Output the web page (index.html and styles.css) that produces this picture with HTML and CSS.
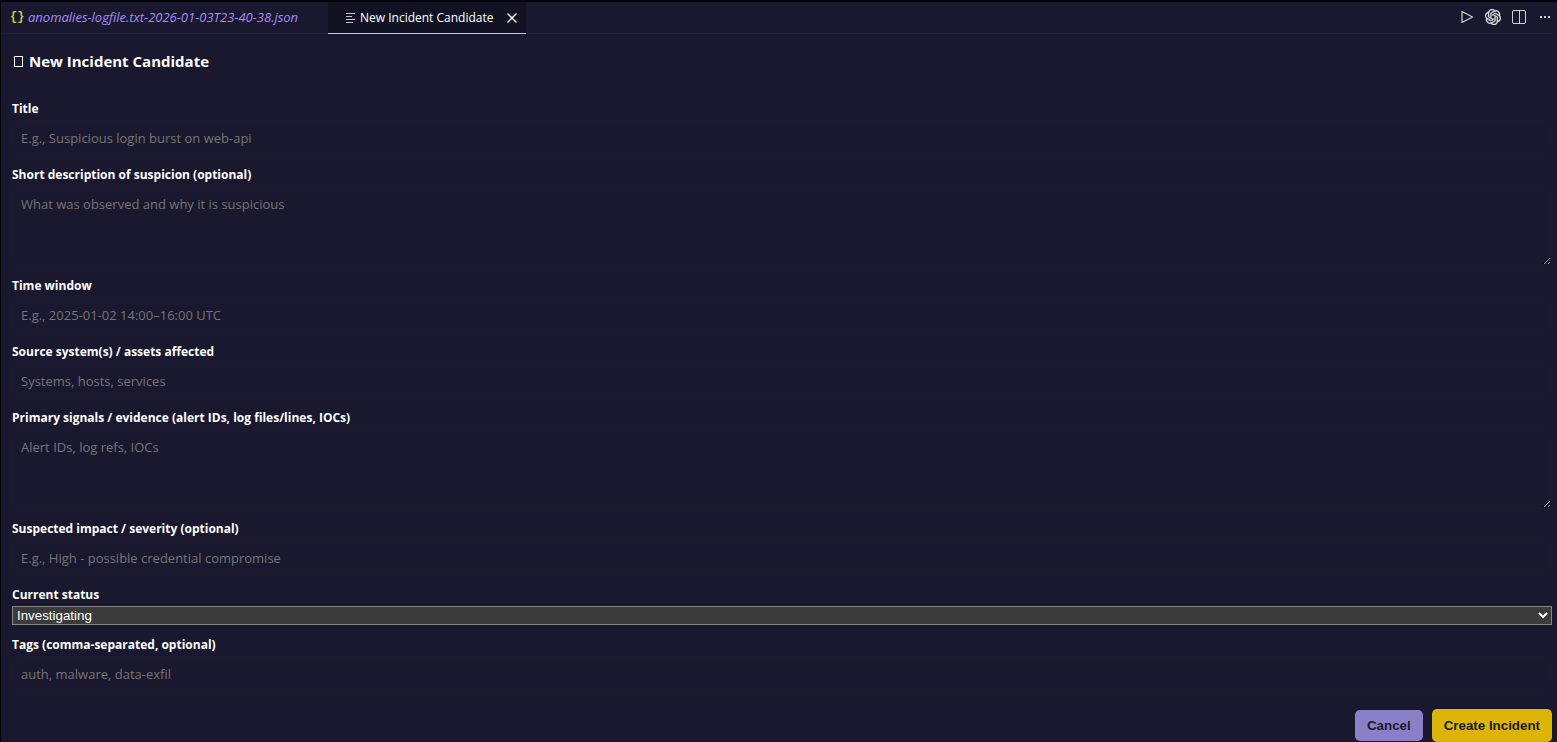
FILE: index.html
```html
<!DOCTYPE html>
<html lang="en">
<head>
  <meta charset="UTF-8">
  <meta name="viewport" content="width=device-width, initial-scale=1.0">
  <title>New Incident Candidate</title>
  <link rel="stylesheet" href="styles.css">
</head>
<body>

  <!-- Editor Tabs -->
  <header class="tab-bar">
    <div class="tab">
      <span class="json-icon">{}</span>
      <span class="tab-name">anomalies-logfile.txt-2026-01-03T23-40-38.json</span>
    </div>
    <div class="tab active">
      <svg class="list-icon" width="10" height="10" viewBox="0 0 10 10" stroke="#c5c5c5">
        <path d="M1 .5h9M1 3.5h6M1 6.5h9M1 9.500h7"/>
      </svg>
      <span class="tab-name">New Incident Candidate</span>
      <button class="icon-btn close-btn" aria-label="Close">
        <svg width="10" height="10" viewBox="0 0 10 10" fill="none" stroke="#fff" stroke-width="1.4">
          <path d="M.5 .5l9 9M9.500 .5l-9 9"/>
        </svg>
      </button>
    </div>
    <div class="actions">
      <button class="icon-btn" aria-label="Run">
        <svg width="16" height="16" viewBox="0 0 16 16" fill="none" stroke="#d0d0d0" stroke-linejoin="round" stroke-width="1.2">
          <path d="M3 2.500v11L13.500 8z"/>
        </svg>
      </button>
      <button class="icon-btn" aria-label="Open chat">
        <svg width="16" height="16" viewBox="0 0 24 24" fill="#e4e4e4" stroke="#e4e4e4" stroke-width=".5">
          <path d="M22.282 9.821a5.985 5.985 0 0 0-.516-4.910 6.046 6.046 0 0 0-6.510-2.900A6.065 6.065 0 0 0 4.981 4.182a5.985 5.985 0 0 0-3.998 2.900 6.046 6.046 0 0 0 .743 7.097 5.980 5.980 0 0 0 .511 4.911 6.051 6.051 0 0 0 6.515 2.900A5.985 5.985 0 0 0 13.260 24a6.056 6.056 0 0 0 5.772-4.206 5.990 5.990 0 0 0 3.998-2.900 6.056 6.056 0 0 0-.748-7.073zM13.260 22.430a4.476 4.476 0 0 1-2.876-1.041l.141-.080 4.779-2.758a.795.795 0 0 0 .393-.681v-6.737l2.020 1.169a.071.071 0 0 1 .038.052v5.583a4.504 4.504 0 0 1-4.495 4.493zM3.600 18.304a4.471 4.471 0 0 1-.535-3.014l.142.085 4.783 2.759a.771.771 0 0 0 .781 0l5.843-3.369v2.332a.080.080 0 0 1-.033.062L9.740 19.950a4.499 4.499 0 0 1-6.140-1.646zM2.341 7.896a4.485 4.485 0 0 1 2.366-1.973V11.600a.766.766 0 0 0 .388.677l5.814 3.354-2.020 1.169a.076.076 0 0 1-.071 0l-4.830-2.787A4.504 4.504 0 0 1 2.341 7.872zm16.596 3.856l-5.833-3.387L15.119 7.200a.076.076 0 0 1 .071 0l4.830 2.791a4.494 4.494 0 0 1-.676 8.105v-5.678a.790.790 0 0 0-.407-.667zm2.011-3.023l-.142-.085-4.774-2.782a.776.776 0 0 0-.785 0L9.409 9.230V6.897a.066.066 0 0 1 .028-.061l4.830-2.787a4.499 4.499 0 0 1 6.681 4.660zM8.307 12.863l-2.020-1.164a.080.080 0 0 1-.038-.057V6.075a4.499 4.499 0 0 1 7.376-3.454l-.142.081L8.704 5.460a.795.795 0 0 0-.393.681zm1.097-2.365l2.602-1.500 2.607 1.500v2.999l-2.597 1.500-2.607-1.500z"/>
        </svg>
      </button>
      <button class="icon-btn" aria-label="Split editor">
        <svg width="16" height="16" viewBox="0 0 16 16" fill="none" stroke="#d0d0d0">
          <rect x="1.500" y="1.500" width="13" height="13" rx="1.500"/>
          <path d="M8.500 1.500v13"/>
        </svg>
      </button>
      <button class="icon-btn" aria-label="More actions">
        <svg width="16" height="16" viewBox="0 0 16 16" fill="#d0d0d0">
          <path d="M3 7h2v2H3zM7 7h2v2H7zM11 7h2v2h-2z"/>
        </svg>
      </button>
    </div>
  </header>

  <!-- Incident Form -->
  <main class="page">
    <h1><span class="box-icon"></span>New Incident Candidate</h1>

    <form>
      <div class="field">
        <label for="title">Title</label>
        <input type="text" id="title" placeholder="E.g., Suspicious login burst on web-api">
      </div>
      <div class="field">
        <label for="description">Short description of suspicion (optional)</label>
        <textarea id="description" placeholder="What was observed and why it is suspicious"></textarea>
      </div>
      <div class="field">
        <label for="timeWindow">Time window</label>
        <input type="text" id="timeWindow" placeholder="E.g., 2025-01-02 14:00–16:00 UTC">
      </div>
      <div class="field">
        <label for="assets">Source system(s) / assets affected</label>
        <input type="text" id="assets" placeholder="Systems, hosts, services">
      </div>
      <div class="field">
        <label for="signals">Primary signals / evidence (alert IDs, log files/lines, IOCs)</label>
        <textarea id="signals" placeholder="Alert IDs, log refs, IOCs"></textarea>
      </div>
      <div class="field">
        <label for="impact">Suspected impact / severity (optional)</label>
        <input type="text" id="impact" placeholder="E.g., High - possible credential compromise">
      </div>
      <div class="field">
        <label for="status">Current status</label>
        <select id="status">
          <option>Investigating</option>
        </select>
      </div>
      <div class="field">
        <label for="tags">Tags (comma-separated, optional)</label>
        <input type="text" id="tags" placeholder="auth, malware, data-exfil">
      </div>

      <div class="buttons">
        <button type="button" class="btn cancel">Cancel</button>
        <button type="button" class="btn create">Create Incident</button>
      </div>
    </form>
  </main>

</body>
</html>
```
FILE: styles.css
```css
* {
  box-sizing: border-box;
}
body {
  margin: 0;
  font-family: "Segoe UI", "Open Sans", "Noto Sans", sans-serif;
  font-size: 13px;
  line-height: 18px;
  color: #fff;
  background-color: #1a182e;
  border-top: 2px solid #030206;
  border-left: 1px solid #030206;
  color-scheme: dark;
}
.tab-bar {
  display: flex;
  height: 32px;
  box-shadow: inset 0 -1px #222036;
}
.tab {
  display: flex;
  align-items: center;
  width: 327px;
  padding: 0 0 2px 9px;
  font-style: italic;
  color: #a78bfa;
  white-space: nowrap;
}
.tab.active {
  width: 198px;
  padding: 0 9px 0 17px;
  font-size: 12px;
  font-weight: 500;
  font-style: normal;
  color: #fff;
  background-color: #121225;
  border-bottom: 1px solid #f5d90a;
}
.json-icon {
  width: 18px;
  font: bold 12px "Liberation Mono", monospace;
  color: #cbcb41;
}
.list-icon {
  margin-right: 5px;
}
.icon-btn {
  display: flex;
  padding: 0;
  border: none;
  background: none;
  cursor: pointer;
}
.close-btn {
  margin-left: auto;
}
.actions {
  display: flex;
  align-items: center;
  gap: 10px;
  margin-left: auto;
  padding: 0 4px 2px 0;
}
.page {
  padding: 16px 5px 0 11px;
}
h1 {
  display: flex;
  align-items: center;
  gap: 6px;
  margin: 0 0 27px;
  font-size: 15px;
  line-height: 22px;
  font-weight: 700;
}
.box-icon {
  width: 9px;
  height: 11px;
  margin-left: 2px;
  border: 1px solid #fff;
}
.field {
  display: flex;
  flex-direction: column;
  gap: 1px;
  margin-bottom: 10px;
}
label {
  font-size: 12px;
  line-height: 20px;
  font-weight: 700;
}
input,
textarea {
  width: 100%;
  height: 35px;
  margin: 0;
  padding: 8px;
  font-family: inherit;
  font-size: 13px;
  line-height: 18px;
  color: #fff;
  background-color: #1a182e;
  border: 1px solid #1c1a2b;
  border-radius: 6px;
}
textarea {
  height: 80px;
  resize: vertical;
}
::placeholder {
  color: #757575;
}
select {
  height: 19px;
  font-family: "Liberation Sans", Arial, sans-serif;
  color: #fff;
  background-color: #3b3b3b;
  border: 1px solid #858585;
  border-radius: 0;
}
.buttons {
  display: flex;
  justify-content: flex-end;
  align-items: center;
  gap: 9px;
  margin-top: 18px;
}
.btn {
  height: 31px;
  padding: 0 12px;
  font-family: "Liberation Sans", Arial, sans-serif;
  font-weight: 600;
  color: #1a182e;
  border: none;
  border-radius: 5px;
  cursor: pointer;
}
.cancel {
  background-color: #8b7fc7;
}
.create {
  height: 33px;
  color: #1a1a1a;
  background-color: #dcb508;
}
```
